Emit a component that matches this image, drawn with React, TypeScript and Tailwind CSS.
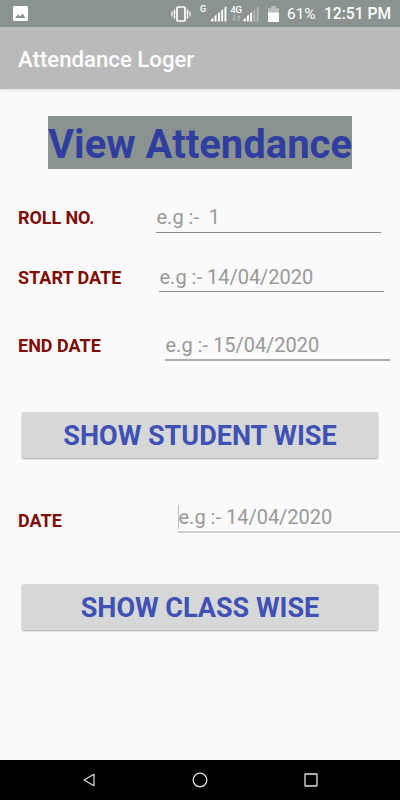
import React from "react";

type FieldProps = {
  label: string;
  hint: string;
  row: string;
  labelClass: string;
  inputClass: string;
  focused?: boolean;
};

function Field({ label, hint, row, labelClass, inputClass, focused }: FieldProps) {
  return (
    <div className={`flex items-start pl-[18px] ${row}`}>
      <span className={`shrink-0 whitespace-pre text-[18px] font-bold leading-6 text-[#7d0d06] ${labelClass}`}>
        {label}
      </span>
      <div className={`flex h-7 shrink-0 items-start whitespace-pre text-[20px] leading-6 text-[#999] ${inputClass}`}>
        {focused && <span className="-mr-px h-6 w-px shrink-0 bg-[#bcbcbc]" />}
        <span className="pl-[0.5px]">{hint}</span>
      </div>
    </div>
  );
}

function WideButton({ children, className }: { children: React.ReactNode; className: string }) {
  return (
    <button
      className={`mx-[22px] flex h-[46px] items-center justify-center rounded-[2px] bg-[#d6d8d7] pt-[2px] text-[27px] font-bold leading-none text-[#3f51b5] shadow-[0_1px_2px_rgba(0,0,0,0.35)] ${className}`}
    >
      {children}
    </button>
  );
}

function StatusBar() {
  return (
    <div className="flex h-[27px] shrink-0 items-center bg-[#8b9391] text-white">
      <svg className="ml-[13px] h-[15px] w-[15px]" viewBox="0 0 15 15">
        <path
          fill="white"
          fillRule="evenodd"
          d="M1.5 0h12Q15 0 15 1.5v12q0 1.5-1.5 1.5h-12Q0 15 0 13.5v-12Q0 0 1.5 0ZM2 12h10.5L9.5 7.5 7.2 10.3 5 8.5Z"
        />
      </svg>
      <svg className="ml-[143px] h-[16px] w-[20px]" viewBox="0 0 20 16" fill="none" stroke="white">
        <rect x="6" y="1" width="8" height="14" rx="1" strokeWidth="1.7" />
        <path d="M3.5 3.5v9M16.5 3.5v9" strokeWidth="1.4" />
        <path d="M1 5.5v5M19 5.5v5" strokeWidth="1.2" />
      </svg>
      <span className="ml-[9px] mt-[-9px] w-[7px] text-[9px] font-medium leading-none">G</span>
      <svg className="ml-[3px] h-[16px] w-[17px]" viewBox="0 0 17 16" fill="white">
        <path d="M1 15.5v-1.8l2.4-2.2v4ZM4.6 15.5v-5.2l1.9-1.8v7ZM8 15.5V7.6l1.9-1.8v9.7ZM11.2 15.5V4.8L13.1 3v12.5ZM14.5 15.5V1.8L16.4 0v15.5Z" />
      </svg>
      <div className="ml-[3px] flex h-[17px] w-[12px] flex-col items-center">
        <span className="text-[9.5px] font-medium leading-[10px] tracking-[-0.5px]">4G</span>
        <svg className="h-[6px] w-[9px]" viewBox="0 0 9 6" fill="none" stroke="#bcc1bf">
          <path d="M2.2 0v5M.4 3.3 2.2 5.2 4 3.3M6.8 6V1M5 2.7 6.8.8 8.6 2.7" />
        </svg>
      </div>
      <svg className="ml-px h-[16px] w-[17px]" viewBox="0 0 17 16" fill="white">
        <path d="M.4 15.5v-1.8l2.3-2.2v4ZM3.9 15.5v-5.2l2-1.8v7ZM7.1 15.5V7.6l2-1.8v9.7Z" />
        <path fill="#b3b9b7" d="M10.4 15.5V4.8L12.3 3v12.5ZM13.7 15.5V1.8L15.6 0v15.5Z" />
      </svg>
      <svg className="ml-[8px] h-[16px] w-[11px]" viewBox="0 0 11 16">
        <path fill="#b9bfbd" d="M3.2 0h4.6v2H11v5H0V2h3.2Z" />
        <path fill="white" d="M0 6.5h11V15q0 1-1 1H1q-1 0-1-1Z" />
      </svg>
      <span className="ml-[8px] mt-[2px] w-[37px] text-[15.4px] leading-none">61%</span>
      <span className="mt-[2px] whitespace-nowrap text-[15.6px] font-medium leading-none">12:51 PM</span>
    </div>
  );
}

function NavBar() {
  return (
    <div className="mt-auto flex h-10 shrink-0 items-center bg-black">
      <svg className="ml-[83px] h-[14px] w-[13px]" viewBox="0 0 13 14" fill="none" stroke="#e2e2e2" strokeWidth="1.2">
        <path d="M1 7 11 1.3v11.4Z" strokeLinejoin="round" />
      </svg>
      <svg className="ml-[96px] h-4 w-4" viewBox="0 0 16 16" fill="none" stroke="#e2e2e2" strokeWidth="1.3">
        <circle cx="8" cy="8" r="6.8" />
      </svg>
      <svg className="ml-[96px] h-[14px] w-[14px]" viewBox="0 0 14 14" fill="none" stroke="#e2e2e2" strokeWidth="1.3">
        <rect x="1" y="1" width="12" height="12" rx=".5" />
      </svg>
    </div>
  );
}

export default function App() {
  return (
    <div className="flex h-[800px] w-[400px] flex-col overflow-hidden bg-[#fafafa] font-['Roboto',sans-serif]">
      <StatusBar />
      <header className="flex h-[62px] shrink-0 items-center bg-[#bababa] pl-[18px] pt-[2px] text-[22.2px] font-medium leading-none text-white shadow-[0_1px_3px_rgba(0,0,0,0.12)]">
        Attendance Loger
      </header>
      <main className="flex flex-col">
        <h1 className="mx-auto mt-[27px] flex h-[53px] w-[304px] items-center justify-center whitespace-nowrap bg-[#8b9391] pt-[5px] text-[40px] font-bold leading-none text-[#303f9f]">
          View Attendance
        </h1>
        <Field
          label="ROLL NO."
          hint="e.g :-  1"
          row="mt-[36px]"
          labelClass="mt-px w-[138px] tracking-[-0.1px]"
          inputClass="w-[225px] border-b border-[#8a8a8a]"
        />
        <Field
          label="START DATE"
          hint="e.g :- 14/04/2020"
          row="mt-[31px]"
          labelClass="mt-[2px] w-[141px]"
          inputClass="w-[225px] border-b border-[#8a8a8a] pt-px"
        />
        <Field
          label="END DATE"
          hint="e.g :- 15/04/2020"
          row="mt-[41px]"
          labelClass="mt-px w-[147px]"
          inputClass="w-[225px] border-b-2 border-[#acacac]"
        />
        <WideButton className="mt-[51px]">SHOW STUDENT WISE</WideButton>
        <Field
          label="DATE"
          hint="e.g :- 14/04/2020"
          row="mt-[47px]"
          labelClass="mt-[4px] w-[160px]"
          inputClass="w-[225px] border-b-2 border-[#cfcfcf]"
          focused
        />
        <WideButton className="mt-[51px]">SHOW CLASS WISE</WideButton>
      </main>
      <NavBar />
    </div>
  );
}
